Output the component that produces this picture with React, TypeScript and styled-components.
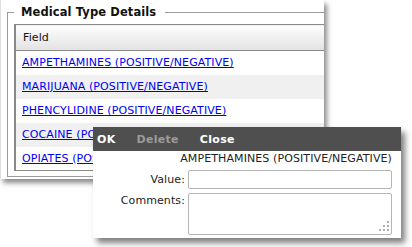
import React from 'react';
import styled, { createGlobalStyle } from 'styled-components';

const GlobalStyle = createGlobalStyle`
  html, body {
    margin: 0;
    padding: 0;
    background: #ffffff;
  }
  body {
    font-family: "DejaVu Sans", Verdana, sans-serif;
    font-size: 11px;
    letter-spacing: 0.1px;
    color: #222;
  }
`;

const fields = [
  'AMPETHAMINES (POSITIVE/NEGATIVE)',
  'MARIJUANA (POSITIVE/NEGATIVE)',
  'PHENCYLIDINE (POSITIVE/NEGATIVE)',
  'COCAINE (POSITIVE/NEGATIVE)',
  'OPIATES (POSITIVE/NEGATIVE)',
];

const Page = styled.div`
  position: relative;
  width: 412px;
  height: 247px;
  overflow: hidden;
`;

// cropped window behind the popup, with its drop shadow
const Panel = styled.div`
  width: 324px;
  height: 179px;
  box-sizing: border-box;
  padding: 5px 0 0 6px;
  background: #ffffff;
  border-left: 1px solid #dedede;
  overflow: hidden;
  box-shadow: 3px 4px 5px rgba(0, 0, 0, 0.45);
`;

const Fieldset = styled.fieldset`
  width: 420px;
  margin: 0;
  padding: 0 6px 5px 6px;
  border: 1px solid #9a9a9a;
`;

const Legend = styled.legend`
  padding: 0 9px 0 7px;
  font-size: 11.5px;
  line-height: 14px;
  font-weight: bold;
  letter-spacing: 0.1px;
  color: #111;
`;

const Table = styled.table`
  width: 100%;
  margin-top: 5px;
  border-collapse: collapse;
  border: 1px solid #8a8a8a;
  border-left: 2px solid #8a8a8a;
`;

const HeadCell = styled.th`
  height: 25px;
  padding: 0 0 0 7px;
  text-align: left;
  font-weight: normal;
  color: #111;
  background: linear-gradient(#fdfdfd, #e2e2e2);
  border-bottom: 1px solid #8a8a8a;
`;

const Row = styled.tr<{ $alt: boolean }>`
  height: 24px;
  background: ${(p) => (p.$alt ? '#f0f0f0' : '#ffffff')};
`;

const Cell = styled.td`
  padding: 0 0 0 6px;
`;

const FieldLink = styled.a`
  color: #0000f0;
  text-decoration: underline;
`;

const Dialog = styled.div`
  position: absolute;
  left: 93px;
  top: 127px;
  width: 308px;
  height: 111px;
  background: #ffffff;
  box-shadow: 4px 5px 6px rgba(0, 0, 0, 0.5);
  display: flex;
  flex-direction: column;
`;

const Toolbar = styled.div`
  height: 24px;
  flex: none;
  display: flex;
  align-items: center;
  gap: 21px;
  padding-left: 4px;
  background: #4f4f4f;
`;

const ToolButton = styled.span<{ $disabled?: boolean }>`
  font-weight: bold;
  font-size: 11px;
  letter-spacing: 0.3px;
  color: ${(p) => (p.$disabled ? '#9b9b9b' : '#ffffff')};
`;

const Form = styled.div`
  display: grid;
  grid-template-columns: 92px 204px;
  column-gap: 3px;
  row-gap: 4px;
  padding: 0 9px 3px 0;
`;

const Title = styled.div`
  grid-column: 1 / -1;
  text-align: right;
  line-height: 15px;
  color: #222;
`;

const Label = styled.label<{ $top?: boolean }>`
  text-align: right;
  line-height: ${(p) => (p.$top ? '15px' : '19px')};
  align-self: ${(p) => (p.$top ? 'start' : 'center')};
  color: #222;
`;

const TextInput = styled.input`
  box-sizing: border-box;
  width: 204px;
  height: 19px;
  margin: 0;
  border: 1px solid #b5b5b5;
  border-radius: 2px;
  outline: none;
`;

const AreaWrap = styled.div`
  position: relative;
  width: 204px;
  height: 42px;
`;

const TextArea = styled.textarea`
  box-sizing: border-box;
  width: 204px;
  height: 42px;
  margin: 0;
  border: 1px solid #b5b5b5;
  border-radius: 2px;
  resize: none;
  outline: none;
`;

const Grip = styled.svg`
  position: absolute;
  right: 2px;
  bottom: 2px;
`;

export default function App() {
  return (
    <Page>
      <GlobalStyle />
      <Panel>
        <Fieldset>
          <Legend>Medical Type Details</Legend>
          <Table>
            <thead>
              <tr>
                <HeadCell>Field</HeadCell>
              </tr>
            </thead>
            <tbody>
              {fields.map((f, i) => (
                <Row key={f} $alt={i % 2 === 1}>
                  <Cell>
                    <FieldLink href="#">{f}</FieldLink>
                  </Cell>
                </Row>
              ))}
            </tbody>
          </Table>
        </Fieldset>
      </Panel>
      <Dialog>
        <Toolbar>
          <ToolButton>OK</ToolButton>
          <ToolButton $disabled>Delete</ToolButton>
          <ToolButton>Close</ToolButton>
        </Toolbar>
        <Form>
          <Title>AMPETHAMINES (POSITIVE/NEGATIVE)</Title>
          <Label>Value:</Label>
          <TextInput />
          <Label $top>Comments:</Label>
          <AreaWrap>
            <TextArea />
            <Grip width="12" height="12" viewBox="0 0 12 12">
              <g fill="#b0b0b0">
                <rect x="9" y="0" width="2" height="2" />
                <rect x="5" y="4" width="2" height="2" />
                <rect x="9" y="4" width="2" height="2" />
                <rect x="1" y="8" width="2" height="2" />
                <rect x="5" y="8" width="2" height="2" />
                <rect x="9" y="8" width="2" height="2" />
              </g>
            </Grip>
          </AreaWrap>
        </Form>
      </Dialog>
    </Page>
  );
}
